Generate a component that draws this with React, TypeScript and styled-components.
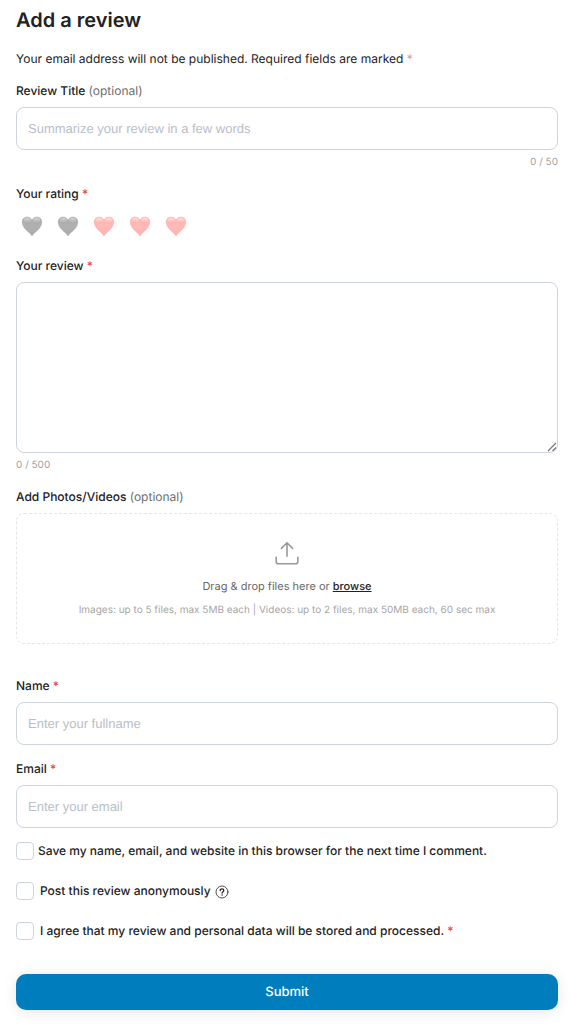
import React, { useState } from "react";
import styled, { createGlobalStyle } from "styled-components";

const GlobalStyle = createGlobalStyle`
  *, *::before, *::after { box-sizing: border-box; }
  body {
    margin: 0;
    background: #fff;
    color: #222;
    font-family: Inter, "Liberation Sans", sans-serif;
    font-size: 12px;
    line-height: 20px;
    text-rendering: geometricPrecision;
  }
`;

const Form = styled.form`
  padding: 6px 22px 14px 16px;
`;

const Title = styled.h1`
  margin: 0;
  font-size: 20px;
  line-height: 28px;
  font-weight: 600;
`;

const Note = styled.p`
  margin: 15px 0 12px;
`;

const Star = styled.span<{ $soft?: boolean }>`
  color: ${(p) => (p.$soft ? "#f58b8b" : "#f0483e")};
`;

const Field = styled.div<{ $gap?: number }>`
  display: flex;
  flex-direction: column;
  gap: 6px;
  margin-bottom: ${(p) => p.$gap ?? 14}px;
`;

const RatingField = styled.fieldset`
  margin: 0 0 14px;
  padding: 0;
  border: 0;
  min-width: 0;
`;

const Label = styled.label`
  font-weight: 500;
`;

const Legend = styled.legend`
  padding: 0;
  font-weight: 500;
`;

const Optional = styled.span`
  font-weight: 400;
  color: #6e6e6e;
`;

const TextInput = styled.input`
  width: 100%;
  height: 43px;
  padding: 0 11px;
  border: 1px solid #cdd4db;
  border-radius: 8px;
  background: #fff;
  color: #222;
  font: 13px "Liberation Sans", Arial, sans-serif;
  text-rendering: inherit;
  &::placeholder { color: #b9bec7; opacity: 1; }
`;

const TextArea = styled.textarea`
  display: block;
  width: 100%;
  height: 171px;
  padding: 11px;
  border: 1px solid #cdd4db;
  border-radius: 8px;
  background: #fff;
  color: #222;
  font: 13px "Liberation Sans", Arial, sans-serif;
  resize: vertical;
  &::-webkit-resizer { background: transparent; }
`;

const AreaWrap = styled.div`
  position: relative;
`;

const Grip = styled.svg`
  position: absolute;
  right: 1px;
  bottom: 1px;
  pointer-events: none;
`;

const Counter = styled.span<{ $end?: boolean }>`
  margin-top: -2px;
  font-size: 10px;
  line-height: 16px;
  color: #a0a0a0;
  text-align: ${(p) => (p.$end ? "right" : "left")};
`;

const Hearts = styled.div`
  display: flex;
  gap: 4px;
  padding-top: 6px;
`;

const HeartOption = styled.label`
  display: grid;
  place-items: center;
  width: 32px;
  height: 32px;
  cursor: pointer;
`;

const HiddenInput = styled.input`
  appearance: none;
  grid-area: 1 / 1;
  width: 20px;
  height: 20px;
  margin: 0;
`;

const HeartSvg = styled.svg`
  grid-area: 1 / 1;
  pointer-events: none;
`;

const DropZone = styled.div`
  display: flex;
  flex-direction: column;
  align-items: center;
  min-height: 131px;
  padding: 27px 12px 24px;
  border: 1px dashed #e6e6e6;
  border-radius: 8px;
  text-align: center;
`;

const DropText = styled.div`
  margin-top: 11px;
  font-size: 11px;
  line-height: 20px;
  color: #666;
`;

const Browse = styled.a`
  color: #222;
  font-weight: 500;
  text-decoration: underline;
`;

const Hint = styled.div`
  margin-top: 6px;
  font-size: 10px;
  line-height: 16px;
  color: #a6a6a6;
`;

const Checks = styled.div`
  display: flex;
  flex-direction: column;
  gap: 20px;
  padding-bottom: 33px;
`;

const CheckRow = styled.div<{ $tight?: boolean }>`
  display: flex;
  align-items: center;
  gap: ${(p) => (p.$tight ? 4 : 6)}px;
  min-height: 20px;
`;

const CheckBox = styled.input`
  appearance: none;
  flex: none;
  width: 18px;
  height: 18px;
  margin: 0;
  border: 1px solid #cdd4db;
  border-radius: 4px;
  background: #fff;
  &:checked { background: #007dbc; border-color: #007dbc; }
`;

const HelpButton = styled.button`
  display: grid;
  place-items: center;
  margin: 1px 0 0 -2px;
  padding: 0;
  border: 0;
  background: none;
`;

const Submit = styled.button`
  display: block;
  width: 100%;
  height: 36px;
  border: 0;
  border-radius: 10px;
  background: #007dbc;
  box-shadow: 0 2px 14px rgba(0, 0, 0, 0.1);
  color: #fff;
  font: 500 13px/20px Inter, "Liberation Sans", sans-serif;
  text-rendering: inherit;
`;

const heartTones = {
  grey: { rim: "#9f9f9f", top: "#a9a9a9", body: "#b1b1b1", shine: "#d6d6d6" },
  pink: { rim: "#f7a5a3", top: "#ffb0ae", body: "#ffbbb8", shine: "#ffe0de" },
};

function Heart({ id, tone }: { id: string; tone: keyof typeof heartTones }) {
  const t = heartTones[tone];
  return (
    <HeartSvg width="22" height="21" viewBox="0 0 22 22" aria-hidden="true">
      <defs>
        <linearGradient id={id} x1="0" y1="0" x2="0" y2="1">
          <stop offset="0" stopColor={t.top} />
          <stop offset="0.5" stopColor={t.body} />
          <stop offset="1" stopColor={t.top} />
        </linearGradient>
        <linearGradient id={`${id}s`} x1="0" y1="0" x2="0" y2="1">
          <stop offset="0" stopColor={t.shine} />
          <stop offset="1" stopColor={t.shine} stopOpacity="0" />
        </linearGradient>
      </defs>
      <path
        d="M11 21C9.6 18.6 6.8 16.8 4.4 14.2C2 11.6 .7 9.4 .7 6.4C.7 3.3 2.9 1 5.8 1C8.3 1 10.3 2.4 11 4.6C11.7 2.4 13.7 1 16.2 1C19.1 1 21.3 3.3 21.3 6.4C21.3 9.4 20 11.6 17.6 14.2C15.2 16.8 12.4 18.6 11 21Z"
        fill={`url(#${id})`}
        stroke={t.rim}
        strokeWidth="0.4"
      />
      <path d="M2 5.6C2.2 3 3.8 1.5 5.9 1.5C8.1 1.5 9.8 2.8 10.2 5.2C8.2 7.6 4 7.8 2 5.6Z" fill={`url(#${id}s)`} />
      <path d="M20 5.6C19.8 3 18.2 1.5 16.1 1.5C13.9 1.5 12.2 2.8 11.8 5.2C13.8 7.6 18 7.8 20 5.6Z" fill={`url(#${id}s)`} />
    </HeartSvg>
  );
}

export default function App() {
  const [rating, setRating] = useState(2);
  const [title, setTitle] = useState("");
  const [review, setReview] = useState("");

  return (
    <>
      <GlobalStyle />
      <Form onSubmit={(e) => e.preventDefault()}>
        <Title>Add a review</Title>
        <Note>
          Your email address will not be published. Required fields are marked <Star $soft>*</Star>
        </Note>

        <Field>
          <Label htmlFor="title">
            Review Title <Optional>(optional)</Optional>
          </Label>
          <TextInput
            id="title"
            maxLength={50}
            placeholder="Summarize your review in a few words"
            value={title}
            onChange={(e) => setTitle(e.target.value)}
          />
          <Counter $end>{title.length} / 50</Counter>
        </Field>

        <RatingField>
          <Legend>
            Your rating <Star>*</Star>
          </Legend>
          <Hearts>
            {[1, 2, 3, 4, 5].map((n) => (
              <HeartOption key={n}>
                <HiddenInput
                  type="radio"
                  name="rating"
                  value={n}
                  aria-label={`${n} of 5`}
                  checked={rating === n}
                  onChange={() => setRating(n)}
                />
                <Heart id={`heart${n}`} tone={n <= rating ? "grey" : "pink"} />
              </HeartOption>
            ))}
          </Hearts>
        </RatingField>

        <Field>
          <Label htmlFor="review">
            Your review <Star>*</Star>
          </Label>
          <AreaWrap>
            <TextArea id="review" maxLength={500} value={review} onChange={(e) => setReview(e.target.value)} />
            <Grip width="10" height="10" viewBox="0 0 10 10" aria-hidden="true">
              <path d="M1 9L9 1M5.5 9L9 5.5" stroke="#777" strokeWidth="1.2" fill="none" />
            </Grip>
          </AreaWrap>
          <Counter>{review.length} / 500</Counter>
        </Field>

        <Field $gap={32}>
          <Label as="div">
            Add Photos/Videos <Optional>(optional)</Optional>
          </Label>
          <DropZone>
            <svg width="24" height="24" viewBox="0 0 24 24" fill="none" stroke="#999" strokeWidth="1.6" strokeLinecap="round" strokeLinejoin="round" aria-hidden="true">
              <path d="M12 15.2V1.8M6.4 7.4L12 1.8L17.6 7.4M1.2 16.4V20.4Q1.2 22.8 3.6 22.8H20.4Q22.8 22.8 22.8 20.4V16.4" />
            </svg>
            <DropText>
              Drag &amp; drop files here or <Browse href="#browse">browse</Browse>
            </DropText>
            <Hint>Images: up to 5 files, max 5MB each | Videos: up to 2 files, max 50MB each, 60 sec max</Hint>
          </DropZone>
        </Field>

        <Field>
          <Label htmlFor="name">
            Name <Star>*</Star>
          </Label>
          <TextInput id="name" placeholder="Enter your fullname" />
        </Field>

        <Field $gap={13}>
          <Label htmlFor="email">
            Email <Star>*</Star>
          </Label>
          <TextInput id="email" type="email" placeholder="Enter your email" />
        </Field>

        <Checks>
          <CheckRow $tight>
            <CheckBox type="checkbox" id="save" />
            <Label htmlFor="save">Save my name, email, and website in this browser for the next time I comment.</Label>
          </CheckRow>
          <CheckRow>
            <CheckBox type="checkbox" id="anonymous" />
            <Label htmlFor="anonymous">Post this review anonymously</Label>
            <HelpButton type="button" aria-label="About anonymous reviews">
              <svg width="14" height="14" viewBox="0 0 14 14" fill="none" stroke="#222" strokeLinecap="round" aria-hidden="true">
                <circle cx="7" cy="7" r="6" strokeWidth="0.8" />
                <path d="M5.2 5.6C5.2 4.5 6 3.9 7 3.9C8 3.9 8.8 4.5 8.8 5.5C8.8 6.7 7.1 6.7 7.1 8" strokeWidth="1.3" />
                <circle cx="7.1" cy="10" r="0.8" fill="#222" stroke="none" />
              </svg>
            </HelpButton>
          </CheckRow>
          <CheckRow>
            <CheckBox type="checkbox" id="agree" />
            <Label htmlFor="agree">
              I agree that my review and personal data will be stored and processed. <Star>*</Star>
            </Label>
          </CheckRow>
        </Checks>

        <Submit type="submit">Submit</Submit>
      </Form>
    </>
  );
}
